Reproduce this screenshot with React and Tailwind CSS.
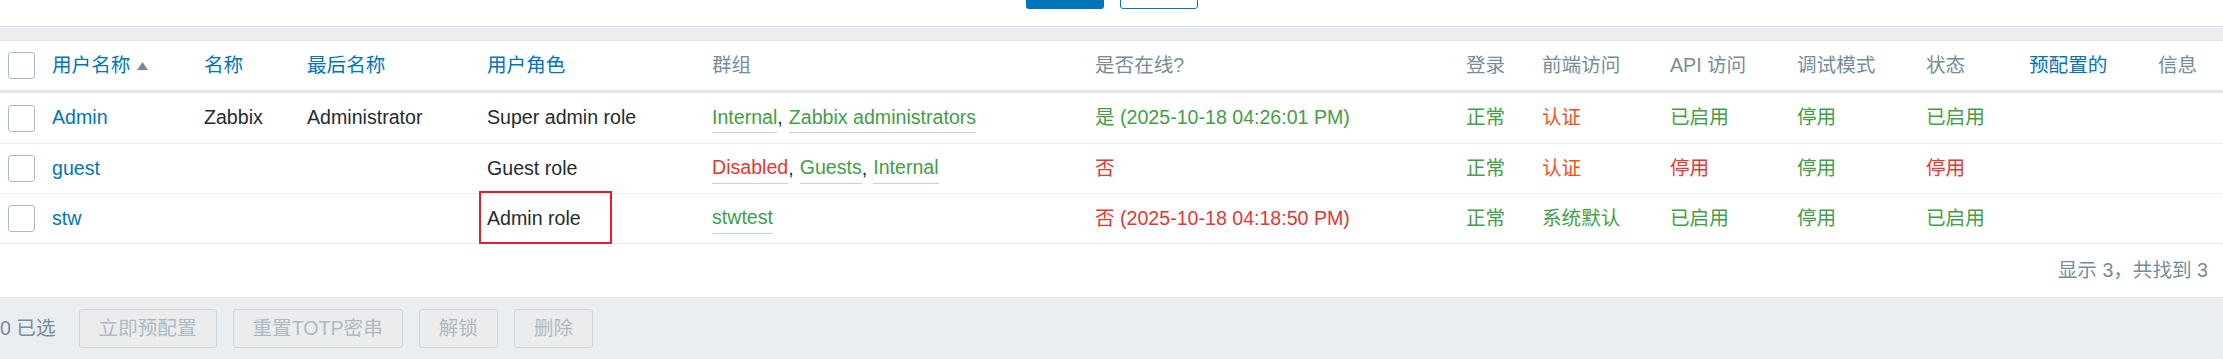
import React from 'react';

const font = { fontFamily: '"Liberation Sans", Arial, "Noto Sans CJK SC", sans-serif' };

const cols = 'grid grid-cols-[52px_152px_103px_180px_225px_383px_371px_76px_128px_127px_129px_103px_129px_65px]';

const Checkbox = () => (
  <span className="block w-[27px] h-[27px] ml-[8px] border border-[#acbbc2] rounded-[3px] bg-white" />
);

const SortArrow = () => (
  <svg width="11" height="8" viewBox="0 0 11 8" className="ml-[7px]">
    <path d="M5.5 0 L11 8 L0 8 Z" fill="#768d99" />
  </svg>
);

const Group = ({ name, tone }) => (
  <span className={`border-b border-[#c9d2d6] ${tone === 'red' ? 'text-[#e33734]' : 'text-[#429e47]'}`}>{name}</span>
);

const users = [
  {
    login: 'Admin', name: 'Zabbix', surname: 'Administrator', role: 'Super admin role',
    groups: [['Internal', 'green'], ['Zabbix administrators', 'green']],
    online: ['是 (2025-10-18 04:26:01 PM)', 'green'],
    frontend: ['认证', 'orange'], api: ['已启用', 'green'], debug: ['停用', 'green'], status: ['已启用', 'green'],
  },
  {
    login: 'guest', name: '', surname: '', role: 'Guest role',
    groups: [['Disabled', 'red'], ['Guests', 'green'], ['Internal', 'green']],
    online: ['否', 'red'],
    frontend: ['认证', 'orange'], api: ['停用', 'red'], debug: ['停用', 'green'], status: ['停用', 'red'],
  },
  {
    login: 'stw', name: '', surname: '', role: 'Admin role', marked: true,
    groups: [['stwtest', 'green']],
    online: ['否 (2025-10-18 04:18:50 PM)', 'red'],
    frontend: ['系统默认', 'green'], api: ['已启用', 'green'], debug: ['停用', 'green'], status: ['已启用', 'green'],
  },
];

const toneClass = (t) =>
  t === 'red' ? 'text-[#e33734]' : t === 'orange' ? 'text-[#f24f1d]' : 'text-[#429e47]';

const Cell = ({ children, className = '' }) => (
  <div className={`flex items-center whitespace-nowrap ${className}`}>{children}</div>
);

export default function App() {
  return (
    <div className="w-[2223px] h-[359px] bg-white text-[19.6px] text-[#1f2c33] overflow-hidden" style={font}>
      {/* top buttons, cut off */}
      <div className="h-[26px] overflow-hidden flex justify-center items-end gap-[16px] pb-[17px] pl-[1px]">
        <span className="block w-[78px] h-[36px] rounded-[3px] bg-[#0275b8]" />
        <span className="block w-[78px] h-[36px] rounded-[3px] bg-white border border-[#0275b8]" />
      </div>
      <div className="h-[15px] bg-[#ebeef0] border-y border-[#dfe4e7]" />

      {/* header */}
      <div className={`${cols} h-[52px] border-b-[3px] border-[#dfe4e7] text-[#768d99]`}>
        <Cell><Checkbox /></Cell>
        <Cell className="text-[#0275b8]">用户名称<SortArrow /></Cell>
        <Cell className="text-[#0275b8]">名称</Cell>
        <Cell className="text-[#0275b8]">最后名称</Cell>
        <Cell className="text-[#0275b8]">用户角色</Cell>
        <Cell>群组</Cell>
        <Cell>是否在线?</Cell>
        <Cell>登录</Cell>
        <Cell>前端访问</Cell>
        <Cell>API 访问</Cell>
        <Cell>调试模式</Cell>
        <Cell>状态</Cell>
        <Cell className="text-[#0275b8]">预配置的</Cell>
        <Cell>信息</Cell>
      </div>

      {users.map((u, i) => (
        <div key={u.login} className={`${cols} ${i === 0 ? 'h-[51px]' : 'h-[50px]'} border-b border-[#e8ecee]`}>
          <Cell><Checkbox /></Cell>
          <Cell className="text-[#0275b8]">{u.login}</Cell>
          <Cell>{u.name}</Cell>
          <Cell>{u.surname}</Cell>
          <Cell className="relative">
            {u.role}
            {u.marked && (
              <span className="absolute left-[-8px] top-[-3px] w-[133px] h-[53px] border-2 border-[#e3202a]" />
            )}
          </Cell>
          <Cell>
            {u.groups.map(([g, t], k) => (
              <React.Fragment key={g}>
                {k > 0 && <span className="mr-[6px]">,</span>}
                <Group name={g} tone={t} />
              </React.Fragment>
            ))}
          </Cell>
          <Cell className={toneClass(u.online[1])}>{u.online[0]}</Cell>
          <Cell className="text-[#429e47]">正常</Cell>
          <Cell className={toneClass(u.frontend[1])}>{u.frontend[0]}</Cell>
          <Cell className={toneClass(u.api[1])}>{u.api[0]}</Cell>
          <Cell className={toneClass(u.debug[1])}>{u.debug[0]}</Cell>
          <Cell className={toneClass(u.status[1])}>{u.status[0]}</Cell>
          <Cell />
          <Cell />
        </div>
      ))}

      {/* paging */}
      <div className="h-[53px] flex items-center justify-end pr-[15px] text-[#768d99]">
        显示 3，共找到 3
      </div>

      {/* action bar */}
      <div className="h-[62px] bg-[#ebeef0] border-t border-[#dfe4e7] flex items-center">
        <span className="text-[#768d99] mr-[23px]">0 已选</span>
        <div className="flex gap-[16px]">
          {['立即预配置', '重置TOTP密串', '解锁', '删除'].map((b) => (
            <span
              key={b}
              className="h-[39px] px-[19px] flex items-center rounded-[3px] border border-[#d0d7da] bg-[#ececec] text-[#acbbc2]"
            >
              {b}
            </span>
          ))}
        </div>
      </div>
    </div>
  );
}
